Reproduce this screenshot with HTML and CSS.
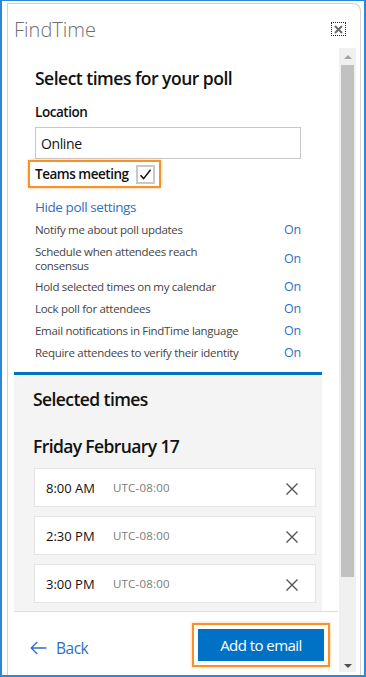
FILE: index.html
```html
<!DOCTYPE html>
<html>
<head>
<meta charset="utf-8">
<link rel="stylesheet" href="styles.css">
</head>
<body>
<div class="frame">
  <div class="win">
    <div class="hdr">
      <span class="title">FindTime</span>
      <span class="close">
        <svg width="9" height="9" viewBox="0 0 9 9"><path d="M1 1L8 8M8 1L1 8" stroke="#6b6b6b" stroke-width="2"/></svg>
      </span>
    </div>
    <div class="main">
      <div class="col">
        <div class="scroll">
          <div class="poll">
            <h1 class="h1">Select times for your poll</h1>
            <div class="lbl">Location</div>
            <div class="input">Online</div>
            <div class="teams">
              <span class="teams-txt">Teams meeting</span>
              <span class="chk">
                <svg width="15" height="15" viewBox="0 0 15 15"><path d="M2.5 8.2L5.6 11.6L12.6 2.8" fill="none" stroke="#111" stroke-width="1.5"/></svg>
              </span>
            </div>
            <div class="link">Hide poll settings</div>
            <div class="settings">
              <div class="row"><span class="rl">Notify me about poll updates</span><span class="on">On</span></div>
              <div class="row two"><span class="rl">Schedule when attendees reach<br>consensus</span><span class="on">On</span></div>
              <div class="row"><span class="rl">Hold selected times on my calendar</span><span class="on">On</span></div>
              <div class="row"><span class="rl">Lock poll for attendees</span><span class="on">On</span></div>
              <div class="row"><span class="rl">Email notifications in FindTime language</span><span class="on">On</span></div>
              <div class="row"><span class="rl">Require attendees to verify their identity</span><span class="on">On</span></div>
            </div>
          </div>
          <div class="sel">
            <h2 class="h2">Selected times</h2>
            <h2 class="h2 day">Friday February 17</h2>
            <div class="cards">
              <div class="card"><span class="tm">8:00 AM</span><span class="tz">UTC-08:00</span><svg class="x" width="12" height="12" viewBox="0 0 12 12"><path d="M0.5 0.5L11.5 11.5M11.5 0.5L0.5 11.5" stroke="#555" stroke-width="1.4"/></svg></div>
              <div class="card"><span class="tm">2:30 PM</span><span class="tz">UTC-08:00</span><svg class="x" width="12" height="12" viewBox="0 0 12 12"><path d="M0.5 0.5L11.5 11.5M11.5 0.5L0.5 11.5" stroke="#555" stroke-width="1.4"/></svg></div>
              <div class="card"><span class="tm">3:00 PM</span><span class="tz">UTC-08:00</span><svg class="x" width="12" height="12" viewBox="0 0 12 12"><path d="M0.5 0.5L11.5 11.5M11.5 0.5L0.5 11.5" stroke="#555" stroke-width="1.4"/></svg></div>
            </div>
          </div>
        </div>
        <div class="foot">
          <div class="back">
            <svg width="17" height="14" viewBox="0 0 17 14"><path d="M16.5 7H1.2M7.2 1L1.2 7L7.2 13" fill="none" stroke="#2f6fbf" stroke-width="1.3"/></svg>
            <span>Back</span>
          </div>
          <div class="hl">
            <div class="btn">Add to email</div>
          </div>
        </div>
      </div>
      <div class="sb">
        <span class="arr up"></span>
        <span class="thumb"></span>
        <span class="arr down"></span>
      </div>
    </div>
  </div>
</div>
</body>
</html>
```
FILE: styles.css
```css
* { box-sizing: border-box; }
html, body { margin: 0; padding: 0; }
body {
  width: 366px;
  height: 677px;
  overflow: hidden;
  background: #fff;
  font-family: "Open Sans", "Noto Sans", sans-serif;
  color: #111;
}
.frame {
  width: 366px;
  height: 677px;
  border: 2px solid #2a88d8;
  border-top-width: 1px;
  padding: 2px 3px 0 5px;
  display: flex;
  flex-direction: column;
}
.win {
  flex: 1;
  border: 1px solid #d3d3d3;
  border-bottom: none;
  border-top-right-radius: 8px;
  display: flex;
  flex-direction: column;
  min-height: 0;
}
.hdr {
  height: 44px;
  display: flex;
  align-items: flex-start;
  justify-content: space-between;
  padding: 0 14px 0 6px;
  flex: none;
}
.title {
  font-size: 20px;
  font-weight: 300;
  color: #6f6f6f;
  line-height: 24px;
  margin-top: 14px;
  letter-spacing: 0;
}
.close {
  margin-top: 18px;
  width: 15px;
  height: 14px;
  border: 1px dotted #222;
  display: flex;
  align-items: center;
  justify-content: center;
}
.main {
  flex: 1;
  display: flex;
  min-height: 0;
}
.col {
  width: 324px;
  margin-left: 6px;
  display: flex;
  flex-direction: column;
}
.scroll {
  flex: none;
  height: 563px;
  overflow: hidden;
}
.poll {
  width: 308px;
  padding: 18px 21px 8px 21px;
  border-bottom: 3px solid #0072c6;
}
.h1 {
  margin: 0;
  font-size: 17.5px;
  line-height: 24px;
  font-weight: 600;
  letter-spacing: -0.5px;
}
.lbl {
  margin-top: 12px;
  font-size: 13.5px;
  line-height: 20px;
  font-weight: 600;
  letter-spacing: -0.45px;
}
.input {
  margin-top: 5px;
  height: 32px;
  border: 1px solid #c8c8c8;
  padding: 0 5px;
  display: flex;
  align-items: center;
  font-size: 14px;
  letter-spacing: -0.4px;
}
.teams {
  margin: 1px 0 0 -7px;
  display: inline-flex;
  align-items: center;
  height: 28px;
  border: 2px solid #f5932a;
  box-shadow: 0 0 3px rgba(245,147,42,0.55);
  padding: 0 4px 0 5px;
}
.teams-txt {
  font-size: 13.5px;
  font-weight: 600;
  letter-spacing: -0.48px;
  line-height: 20px;
}
.chk {
  margin-left: 7px;
  width: 19px;
  height: 19px;
  border: 2px solid #c9c9c9;
  display: flex;
  align-items: center;
  justify-content: center;
}
.link {
  margin-top: 9px;
  font-size: 13.5px;
  line-height: 20px;
  color: #2f6fbf;
  letter-spacing: -0.42px;
}
.settings { margin-top: 2px; }
.row {
  min-height: 22px;
  padding: 4px 0;
  display: flex;
  align-items: center;
  justify-content: space-between;
  font-size: 11.5px;
  line-height: 14px;
  color: #444;
}
.two { padding: 3.5px 0; }
.rl { white-space: nowrap; letter-spacing: -0.3px; }
.on { color: #2f6fbf; font-size: 12.5px; letter-spacing: -0.2px; }
.sel {
  width: 308px;
  background: #f4f4f4;
  padding: 12px 6px 9px 20px;
}
.h2 {
  margin: 0 0 0 -1px;
  font-size: 17.5px;
  line-height: 24px;
  font-weight: 600;
  letter-spacing: -0.58px;
}
.day { margin-top: 23px; letter-spacing: -0.62px; }
.cards {
  margin-top: 10px;
  display: flex;
  flex-direction: column;
  gap: 9px;
}
.card {
  height: 39px;
  background: #fff;
  border: 1px solid #e4e4e4;
  display: flex;
  align-items: center;
  padding: 0 17px 0 11px;
}
.tm {
  width: 67px;
  font-size: 13px;
  letter-spacing: 0;
  color: #111;
}
.tz {
  font-size: 11.5px;
  color: #7a7a7a;
  letter-spacing: 0.2px;
}
.x { margin-left: auto; margin-top: 3px; }
.foot {
  flex: 1;
  border-top: 1px solid #dedede;
  display: flex;
  align-items: flex-start;
  justify-content: space-between;
  padding: 11px 8px 0 16px;
}
.back {
  margin-top: 15px;
  display: flex;
  align-items: center;
  gap: 9px;
  color: #2f6fbf;
  font-size: 15.5px;
  line-height: 20px;
  letter-spacing: -0.5px;
}
.hl {
  border: 2px solid #f5932a;
  box-shadow: 0 0 3px rgba(245,147,42,0.55);
  padding: 4px;
}
.btn {
  width: 126px;
  height: 32px;
  background: #0072c6;
  color: #fff;
  font-size: 15px;
  letter-spacing: -0.55px;
  display: flex;
  align-items: center;
  justify-content: center;
}
.sb {
  width: 17px;
  margin-left: 1px;
  margin-bottom: 3px;
  background: #f0f0f0;
  display: flex;
  flex-direction: column;
  align-items: center;
}
.thumb {
  width: 13px;
  height: 512px;
  margin-top: 6px;
  background: #c1c1c1;
}
.arr { width: 0; height: 0; border-left: 4px solid transparent; border-right: 4px solid transparent; }
.up { margin-top: 7px; border-bottom: 4px solid #a3a3a3; }
.down { margin-top: auto; margin-bottom: 4px; border-top: 4px solid #505050; }
```
